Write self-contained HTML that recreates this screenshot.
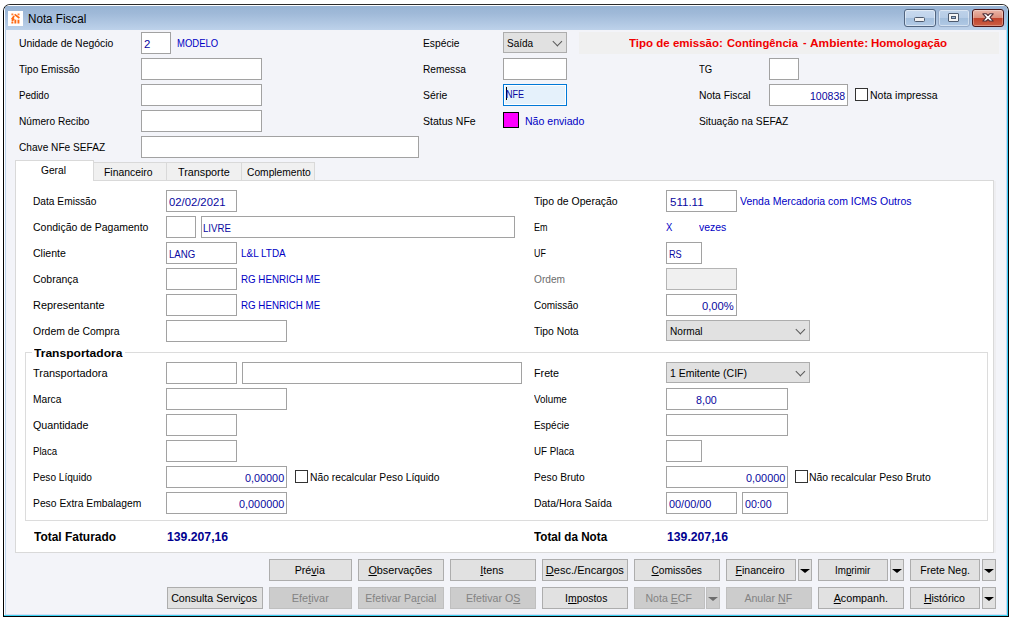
<!DOCTYPE html><html lang="pt-BR"><head><meta charset="utf-8"><title>Nota Fiscal</title><style>

html,body{margin:0;padding:0;background:#fff}
body{width:1011px;height:618px;position:relative;overflow:hidden;font:11px "Liberation Sans",sans-serif;color:#000}
div{position:absolute;box-sizing:border-box}
.t{position:absolute;white-space:nowrap;line-height:13px;font-size:11px;display:inline-block;transform-origin:0 0}
.l{color:#000}.dis{color:#6d6d6d}
.e{color:#0808a0}.b{color:#0000c4}
.red{color:#f00000;font-weight:bold}
.cap{font-weight:bold;color:#000}
.tot{font-weight:bold;font-size:12px;line-height:14px;color:#000}
.nv{color:#000090}
.win{left:3px;top:4px;width:1006px;height:613px;border:1px solid #000;border-top-color:#2a2a2a;border-radius:7px 7px 0 0;background:#f3f4f9;overflow:hidden}
.tb{left:1px;top:0;width:1002px;height:25px;border-top:1px solid #fff;background:linear-gradient(#98b4d4,#9fb9d8 30%,#bdd2ea)}
.fl{left:0;top:0;width:2px;height:611px;border-left:1px solid #fff;background:linear-gradient(#a9c2df,#bcd4ee 10%,#bcd4ee)}
.fr{left:1002px;top:0;width:2px;height:611px;border-left:1px solid #c9d5f0;background:linear-gradient(#a6c0de 0,#9fd0ee 8px,#3ccbf2 22px,#2fcdf3)}
.fb{left:0;top:610px;width:1004px;height:1px;background:#3bd3f2}
.fb2{left:2px;top:609px;width:1000px;height:1px;background:#d5dcf2}
.ttl{left:23.7px;top:7px;font-size:12px;line-height:14px;color:#000;position:absolute;white-space:nowrap;display:inline-block;transform-origin:0 0;transform:scaleX(.97)}
.ico{left:5px;top:6px;width:16px;height:16px}
.cbn{width:32px;height:18px;border:1px solid #50647f;border-radius:3px;background:linear-gradient(#c9daef 0,#bfd3eb 48%,#a4bfdd 52%,#b3cbe6 100%);box-shadow:inset 0 0 0 1px rgba(255,255,255,.45)}
.cbr{border-color:#97acc8;background:linear-gradient(#bed2ea 0,#b6cce6 48%,#a3bedc 52%,#b0c9e5 100%)}
.cbx{border-color:#4a1518;background:linear-gradient(#eab6a8 0,#dc8f7c 48%,#c2432b 52%,#cb5f45 100%);box-shadow:inset 0 0 0 1px rgba(255,255,255,.3)}
.gm{left:9px;top:7px;width:11px;height:5px;background:#f1f1f1;border:1px solid #4d5a6e;border-radius:1.5px}
.gr{left:9px;top:3px;width:11px;height:9px;background:#f4f4f4;border:1px solid #4d5a6e;border-radius:1px}
.gr i{position:absolute;left:2px;top:2px;width:5px;height:3px;background:#9db9d9;border:1px solid #4d5a6e;box-sizing:border-box}
.caret{background:#000}
.in{background:#fff;border:1px solid #a2a2a2}
.foc{background:#e5f1fb;border-color:#0078d7;box-shadow:inset 0 0 0 1px #fff}
.disb{background:#f0f0f0;border-color:#b4b4b4}
.cb{background:#e1e1e1;border:1px solid #adadad}
.cb:after{content:"";position:absolute;right:4.9px;top:4.6px;width:5.8px;height:5.8px;border-right:1px solid #5a5a5a;border-bottom:1px solid #5a5a5a;transform:rotate(45deg)}
.mag{background:#ff00ff;border:1px solid #000}
.band{background:#f0f0f0}
.chk{background:#fff;border:1px solid #333}
.pshadow{background:#eeeef1}
.panel{background:#fff;border:1px solid #d9d9d9}
.tab{background:#f0f0f0;border:1px solid #d9d9d9}
.tabA{background:#fff;border:1px solid #d9d9d9;border-bottom:none}
.grp{border:1px solid #dcdcdc}
.grpcap{background:#fff}
.btn{background:#e1e1e1;border:1px solid #adadad;text-align:center;font-size:11px;line-height:20px;color:#000;white-space:nowrap}
.btn span{display:inline-block}
.bd{background:#cccccc;border-color:#bfbfbf;color:#838383}
.arr{position:absolute;left:1px;top:8.8px;width:0;height:0;border-left:5px solid transparent;border-right:5px solid transparent;border-top:4.6px solid #000}
.bd .arr{border-top-color:#6d6d6d}

</style></head><body>
<div class="win"><div class="fl"></div><div class="fr"></div><div class="tb"></div><div class="fb2"></div><div class="fb"></div>
<div class="cbn" style="left:900px;top:4px"><div class="gm"></div></div>
<div class="cbn cbr" style="left:934px;top:4px"><div class="gr"><i></i></div></div>
<div class="cbn cbx" style="left:968px;top:4px"><svg width="30" height="16" viewBox="0 0 30 16" style="position:absolute;left:0;top:0"><polygon points="9.8,3.8 13.4,3.8 15,5.5 16.6,3.8 20.2,3.8 17,7.4 20.2,11 16.6,11 15,9.3 13.4,11 9.8,11 13,7.4" fill="#fff" stroke="#4f3038" stroke-width="1.1" stroke-linejoin="round"/></svg></div>
<svg class="ico" width="16" height="16" viewBox="0 0 16 16" style="position:absolute;left:4.1px;top:5.8px"><rect x="0" y="0" width="15" height="15" fill="#fff"/><g fill="#ff6a14" stroke="none"><rect x="3.4" y="2.5" width="1.9" height="1.8" opacity=".85"/><rect x="9.6" y="2.5" width="1.9" height="1.8" opacity=".85"/><rect x="3.4" y="10.6" width="1.9" height="1.9"/><rect x="6.4" y="8.7" width="1.9" height="3.8"/><rect x="9.5" y="8.7" width="1.9" height="3.8"/></g><g stroke="#ff6a14" stroke-width="1.8" fill="none"><path d="M6.6 3.4 L11.4 7 M6.1 4.9 L3.7 8.4 M6.2 7.6 L4 10"/></g></svg>

<span class="ttl" id="ttl">Nota Fiscal</span></div>
<div class="in" style="left:141px;top:32px;width:30px;height:22px;"></div>
<div class="in" style="left:141px;top:58px;width:121px;height:22px;"></div>
<div class="in" style="left:141px;top:84px;width:121px;height:22px;"></div>
<div class="in" style="left:141px;top:110px;width:121px;height:22px;"></div>
<div class="in" style="left:141px;top:136px;width:278px;height:22px;"></div>
<div class="cb" style="left:503px;top:32px;width:64px;height:21px;"></div>
<div class="in" style="left:503px;top:58px;width:64px;height:22px;"></div>
<div class="in foc" style="left:503px;top:84px;width:64px;height:22px;"></div>
<div class="caret" style="left:506px;top:87px;width:1px;height:13px;"></div>
<div class="mag" style="left:503px;top:112px;width:16px;height:16px;"></div>
<div class="band" style="left:579px;top:32px;width:420px;height:22px;"></div>
<div class="in" style="left:769px;top:58px;width:30px;height:22px;"></div>
<div class="in" style="left:769px;top:84px;width:79px;height:22px;"></div>
<div class="chk" style="left:855px;top:88px;width:13px;height:13px;"></div>
<div class="pshadow" style="left:994px;top:181px;width:2px;height:372px;"></div>
<div class="panel" style="left:15px;top:180px;width:979px;height:373px;"></div>
<div class="tab" style="left:93px;top:162px;width:74px;height:19px;"></div>
<div class="tab" style="left:166px;top:162px;width:76px;height:19px;"></div>
<div class="tab" style="left:241px;top:162px;width:74px;height:19px;"></div>
<div class="tabA" style="left:15px;top:160px;width:79px;height:21px;"></div>
<div class="in" style="left:166px;top:190px;width:71px;height:22px;"></div>
<div class="in" style="left:166px;top:216px;width:30px;height:22px;"></div>
<div class="in" style="left:201px;top:216px;width:314px;height:22px;"></div>
<div class="in" style="left:166px;top:242px;width:71px;height:22px;"></div>
<div class="in" style="left:166px;top:268px;width:71px;height:22px;"></div>
<div class="in" style="left:166px;top:294px;width:71px;height:22px;"></div>
<div class="in" style="left:166px;top:320px;width:121px;height:22px;"></div>
<div class="in" style="left:666px;top:190px;width:71px;height:22px;"></div>
<div class="in" style="left:666px;top:242px;width:36px;height:22px;"></div>
<div class="in disb" style="left:666px;top:268px;width:71px;height:22px;"></div>
<div class="in" style="left:666px;top:294px;width:71px;height:22px;"></div>
<div class="cb" style="left:666px;top:320px;width:144px;height:21px;"></div>
<div class="grp" style="left:25px;top:352px;width:963px;height:169px;"></div>
<div class="grpcap" style="left:32px;top:346px;width:93px;height:13px;"></div>
<div class="in" style="left:166px;top:362px;width:71px;height:22px;"></div>
<div class="in" style="left:242px;top:362px;width:280px;height:22px;"></div>
<div class="in" style="left:166px;top:388px;width:121px;height:22px;"></div>
<div class="in" style="left:166px;top:414px;width:71px;height:22px;"></div>
<div class="in" style="left:166px;top:440px;width:71px;height:22px;"></div>
<div class="in" style="left:166px;top:466px;width:121px;height:22px;"></div>
<div class="chk" style="left:295px;top:470px;width:13px;height:13px;"></div>
<div class="in" style="left:166px;top:492px;width:121px;height:22px;"></div>
<div class="cb" style="left:666px;top:362px;width:144px;height:21px;"></div>
<div class="in" style="left:666px;top:388px;width:122px;height:22px;"></div>
<div class="in" style="left:666px;top:414px;width:122px;height:22px;"></div>
<div class="in" style="left:666px;top:440px;width:36px;height:22px;"></div>
<div class="in" style="left:666px;top:466px;width:122px;height:22px;"></div>
<div class="chk" style="left:795px;top:470px;width:13px;height:13px;"></div>
<div class="in" style="left:666px;top:492px;width:71px;height:22px;"></div>
<div class="in" style="left:742px;top:492px;width:46px;height:22px;"></div>
<div class="btn" style="left:269px;top:559px;width:83px;height:22px"><span style="transform:translateX(-0.8px) scaleX(0.971)">Pré<u>v</u>ia</span></div>
<div class="btn" style="left:358px;top:559px;width:86px;height:22px"><span style="transform:translateX(-1.1px) scaleX(0.985)"><u>O</u>bservações</span></div>
<div class="btn" style="left:450px;top:559px;width:86px;height:22px"><span style="transform:translateX(-1.0px) scaleX(0.976)"><u>I</u>tens</span></div>
<div class="btn" style="left:542px;top:559px;width:86px;height:22px"><span style="transform:translateX(-0.0px) scaleX(1.006)"><u>D</u>esc./Encargos</span></div>
<div class="btn" style="left:634px;top:559px;width:86px;height:22px"><span style="transform:translateX(-0.5px) scaleX(0.927)"><u>C</u>omissões</span></div>
<div class="btn" style="left:726px;top:559px;width:70px;height:22px"><span style="transform:translateX(-0.6px) scaleX(0.953)"><u>F</u>inanceiro</span></div>
<div class="btn" style="left:798px;top:559px;width:14px;height:22px"><i class="arr"></i></div>
<div class="btn" style="left:818px;top:559px;width:70px;height:22px"><span style="transform:translateX(-0.2px) scaleX(0.885)">Im<u>p</u>rimir</span></div>
<div class="btn" style="left:890px;top:559px;width:14px;height:22px"><i class="arr"></i></div>
<div class="btn" style="left:910px;top:559px;width:70px;height:22px"><span style="transform:translateX(0.1px) scaleX(0.957)">Frete Ne<u>g</u>.</span></div>
<div class="btn" style="left:982px;top:559px;width:14px;height:22px"><i class="arr"></i></div>
<div class="btn" style="left:167px;top:587px;width:96px;height:22px"><span style="transform:translateX(-1.2px) scaleX(0.970)">Consulta Servi<u>ç</u>os</span></div>
<div class="btn bd" style="left:269px;top:587px;width:83px;height:22px"><span style="transform:translateX(-0.4px) scaleX(0.994)">Efe<u>t</u>ivar</span></div>
<div class="btn bd" style="left:358px;top:587px;width:86px;height:22px"><span style="transform:translateX(-0.2px) scaleX(0.959)">Efetivar Pa<u>r</u>cial</span></div>
<div class="btn bd" style="left:450px;top:587px;width:86px;height:22px"><span style="transform:translateX(-0.0px) scaleX(0.965)">Efetivar O<u>S</u></span></div>
<div class="btn" style="left:542px;top:587px;width:86px;height:22px"><span style="transform:translateX(0.9px) scaleX(0.946)">I<u>m</u>postos</span></div>
<div class="btn bd" style="left:634px;top:587px;width:71px;height:22px"><span style="transform:translateX(-0.5px) scaleX(0.962)">Nota <u>E</u>CF</span></div>
<div class="btn bd" style="left:706px;top:587px;width:14px;height:22px"><i class="arr"></i></div>
<div class="btn bd" style="left:726px;top:587px;width:86px;height:22px"><span style="transform:translateX(-0.5px) scaleX(0.964)">Anular <u>N</u>F</span></div>
<div class="btn" style="left:818px;top:587px;width:86px;height:22px"><span style="transform:translateX(-0.0px) scaleX(0.975)"><u>A</u>companh.</span></div>
<div class="btn" style="left:910px;top:587px;width:70px;height:22px"><span style="transform:translateX(-1.0px) scaleX(0.959)"><u>H</u>istórico</span></div>
<div class="btn" style="left:982px;top:587px;width:14px;height:22px"><i class="arr"></i></div>
<span class="t l" id="t1" style="left:18.8px;top:37px;transform:scaleX(0.946)">Unidade de Negócio</span>
<span class="t l" id="t2" style="left:18.8px;top:63px;transform:scaleX(0.9167)">Tipo Emissão</span>
<span class="t l" id="t3" style="left:18.8px;top:89px;transform:scaleX(0.88)">Pedido</span>
<span class="t l" id="t4" style="left:18.8px;top:115px;transform:scaleX(0.9221)">Número Recibo</span>
<span class="t l" id="t5" style="left:18.8px;top:141px;transform:scaleX(0.9202)">Chave NFe SEFAZ</span>
<span class="t e" id="t6" style="left:144.3px;top:38px;transform:scaleX(1.0333)">2</span>
<span class="t b" id="t7" style="left:176.8px;top:37px;transform:scaleX(0.8625)">MODELO</span>
<span class="t l" id="t8" style="left:423.0px;top:37px;transform:scaleX(0.9333)">Espécie</span>
<span class="t l" id="t9" style="left:423.0px;top:63px;transform:scaleX(0.9234)">Remessa</span>
<span class="t l" id="t10" style="left:423.0px;top:89px;transform:scaleX(0.9462)">Série</span>
<span class="t l" id="t11" style="left:423.0px;top:115px;transform:scaleX(0.9582)">Status NFe</span>
<span class="t l" id="t12" style="left:506.5px;top:37px;transform:scaleX(0.9103)">Saída</span>
<span class="t e" id="t13" style="left:506.2px;top:88px;transform:scaleX(0.8227)">NFE</span>
<span class="t b" id="t14" style="left:524.8px;top:115px;transform:scaleX(0.9597)">Não enviado</span>
<span class="t red" id="t15" style="left:629.3px;top:37px;transform:scaleX(1.0461)">Tipo de emissão:</span>
<span class="t red" id="t16" style="left:726.5px;top:37px;transform:scaleX(1.0186)">Contingência</span>
<span class="t red" id="t17" style="left:802.8px;top:36px;transform:scaleX(0.975)">-</span>
<span class="t red" id="t18" style="left:810.3px;top:37px;transform:scaleX(1.0811)">Ambiente:</span>
<span class="t red" id="t19" style="left:871.3px;top:37px;transform:scaleX(1.0466)">Homologação</span>
<span class="t l" id="t20" style="left:698.8px;top:63px;transform:scaleX(0.8667)">TG</span>
<span class="t l" id="t21" style="left:698.8px;top:89px;transform:scaleX(0.9382)">Nota Fiscal</span>
<span class="t e" id="t22" style="left:810.0px;top:90px;transform:scaleX(0.9556)">100838</span>
<span class="t l" id="t23" style="left:870.0px;top:89px;transform:scaleX(0.9535)">Nota impressa</span>
<span class="t l" id="t24" style="left:698.8px;top:115px;transform:scaleX(0.9292)">Situação na SEFAZ</span>
<span class="t l" id="t25" style="left:41.4px;top:164px;transform:scaleX(0.9259)">Geral</span>
<span class="t l" id="t26" style="left:104.2px;top:166px;transform:scaleX(0.9462)">Financeiro</span>
<span class="t l" id="t27" style="left:178.2px;top:166px;transform:scaleX(0.9792)">Transporte</span>
<span class="t l" id="t28" style="left:246.9px;top:166px;transform:scaleX(0.9319)">Complemento</span>
<span class="t l" id="t29" style="left:32.6px;top:195px;transform:scaleX(0.9261)">Data Emissão</span>
<span class="t l" id="t30" style="left:32.6px;top:221px;transform:scaleX(0.9529)">Condição de Pagamento</span>
<span class="t l" id="t31" style="left:32.6px;top:247px;transform:scaleX(0.9588)">Cliente</span>
<span class="t l" id="t32" style="left:32.6px;top:273px;transform:scaleX(0.95)">Cobrança</span>
<span class="t l" id="t33" style="left:32.6px;top:299px;transform:scaleX(0.9917)">Representante</span>
<span class="t l" id="t34" style="left:32.6px;top:325px;transform:scaleX(0.9505)">Ordem de Compra</span>
<span class="t e" id="t35" style="left:168.5px;top:196px;transform:scaleX(1.0255)">02/02/2021</span>
<span class="t e" id="t36" style="left:203.3px;top:222px;transform:scaleX(0.8781)">LIVRE</span>
<span class="t e" id="t37" style="left:168.5px;top:248px;transform:scaleX(0.8767)">LANG</span>
<span class="t b" id="t38" style="left:241.3px;top:247px;transform:scaleX(0.902)">L&amp;L LTDA</span>
<span class="t b" id="t39" style="left:241.3px;top:273px;transform:scaleX(0.8876)">RG HENRICH ME</span>
<span class="t b" id="t40" style="left:241.3px;top:299px;transform:scaleX(0.8876)">RG HENRICH ME</span>
<span class="t l" id="t41" style="left:533.9px;top:195px;transform:scaleX(0.9545)">Tipo de Operação</span>
<span class="t l" id="t42" style="left:533.9px;top:221px;transform:scaleX(0.8188)">Em</span>
<span class="t l" id="t43" style="left:533.9px;top:247px;transform:scaleX(0.8067)">UF</span>
<span class="t l dis" id="t44" style="left:533.9px;top:273px;transform:scaleX(0.9235)">Ordem</span>
<span class="t l" id="t45" style="left:533.9px;top:299px;transform:scaleX(0.9061)">Comissão</span>
<span class="t l" id="t46" style="left:533.9px;top:325px;transform:scaleX(0.9417)">Tipo Nota</span>
<span class="t e" id="t47" style="left:669.6px;top:196px;transform:scaleX(1.05)">511.11</span>
<span class="t b" id="t48" style="left:739.6px;top:195px;transform:scaleX(0.9544)">Venda Mercadoria com ICMS Outros</span>
<span class="t b" id="t49" style="left:666.3px;top:221px;transform:scaleX(0.8571)">X</span>
<span class="t b" id="t50" style="left:698.9px;top:221px;transform:scaleX(0.9517)">vezes</span>
<span class="t e" id="t51" style="left:668.8px;top:248px;transform:scaleX(0.8333)">RS</span>
<span class="t e" id="t52" style="left:701.9px;top:300px;transform:scaleX(1.0188)">0,00%</span>
<span class="t l" id="t53" style="left:669.6px;top:325px;transform:scaleX(0.9194)">Normal</span>
<span class="t cap" id="t54" style="left:34.0px;top:347px;transform:scaleX(1.0963)">Transportadora</span>
<span class="t l" id="t55" style="left:32.6px;top:367px;transform:scaleX(0.996)">Transportadora</span>
<span class="t l" id="t56" style="left:32.6px;top:393px;transform:scaleX(0.929)">Marca</span>
<span class="t l" id="t57" style="left:32.6px;top:419px;transform:scaleX(0.9754)">Quantidade</span>
<span class="t l" id="t58" style="left:32.6px;top:445px;transform:scaleX(0.875)">Placa</span>
<span class="t l" id="t59" style="left:32.6px;top:471px;transform:scaleX(0.9172)">Peso Líquido</span>
<span class="t l" id="t60" style="left:32.6px;top:497px;transform:scaleX(0.9379)">Peso Extra Embalagem</span>
<span class="t e" id="t61" style="left:244.6px;top:472px;transform:scaleX(0.985)">0,00000</span>
<span class="t l" id="t62" style="left:309.6px;top:471px;transform:scaleX(0.9377)">Não recalcular Peso Líquido</span>
<span class="t e" id="t63" style="left:238.6px;top:498px;transform:scaleX(0.987)">0,000000</span>
<span class="t l" id="t64" style="left:533.8px;top:367px;transform:scaleX(0.9769)">Frete</span>
<span class="t l" id="t65" style="left:533.8px;top:393px;transform:scaleX(0.8946)">Volume</span>
<span class="t l" id="t66" style="left:533.8px;top:419px;transform:scaleX(0.9026)">Espécie</span>
<span class="t l" id="t67" style="left:533.8px;top:445px;transform:scaleX(0.8889)">UF Placa</span>
<span class="t l" id="t68" style="left:533.8px;top:471px;transform:scaleX(0.9309)">Peso Bruto</span>
<span class="t l" id="t69" style="left:533.8px;top:497px;transform:scaleX(0.95)">Data/Hora Saída</span>
<span class="t l" id="t70" style="left:670.0px;top:367px;transform:scaleX(0.9537)">1 Emitente (CIF)</span>
<span class="t e" id="t71" style="left:695.8px;top:394px;transform:scaleX(0.9727)">8,00</span>
<span class="t e" id="t72" style="left:746.0px;top:472px;transform:scaleX(0.9875)">0,00000</span>
<span class="t l" id="t73" style="left:809.2px;top:471px;transform:scaleX(0.9481)">Não recalcular Peso Bruto</span>
<span class="t e" id="t74" style="left:669.2px;top:498px;transform:scaleX(0.9907)">00/00/00</span>
<span class="t e" id="t75" style="left:744.8px;top:498px;transform:scaleX(0.9679)">00:00</span>
<span class="t tot" id="t76" style="left:34.3px;top:530px;transform:scaleX(0.9952)">Total Faturado</span>
<span class="t tot nv" id="t77" style="left:166.6px;top:530px;transform:scaleX(1.0183)">139.207,16</span>
<span class="t tot" id="t78" style="left:534.1px;top:530px;transform:scaleX(0.9737)">Total da Nota</span>
<span class="t tot nv" id="t79" style="left:666.9px;top:530px;transform:scaleX(1.0183)">139.207,16</span>
</body></html>
